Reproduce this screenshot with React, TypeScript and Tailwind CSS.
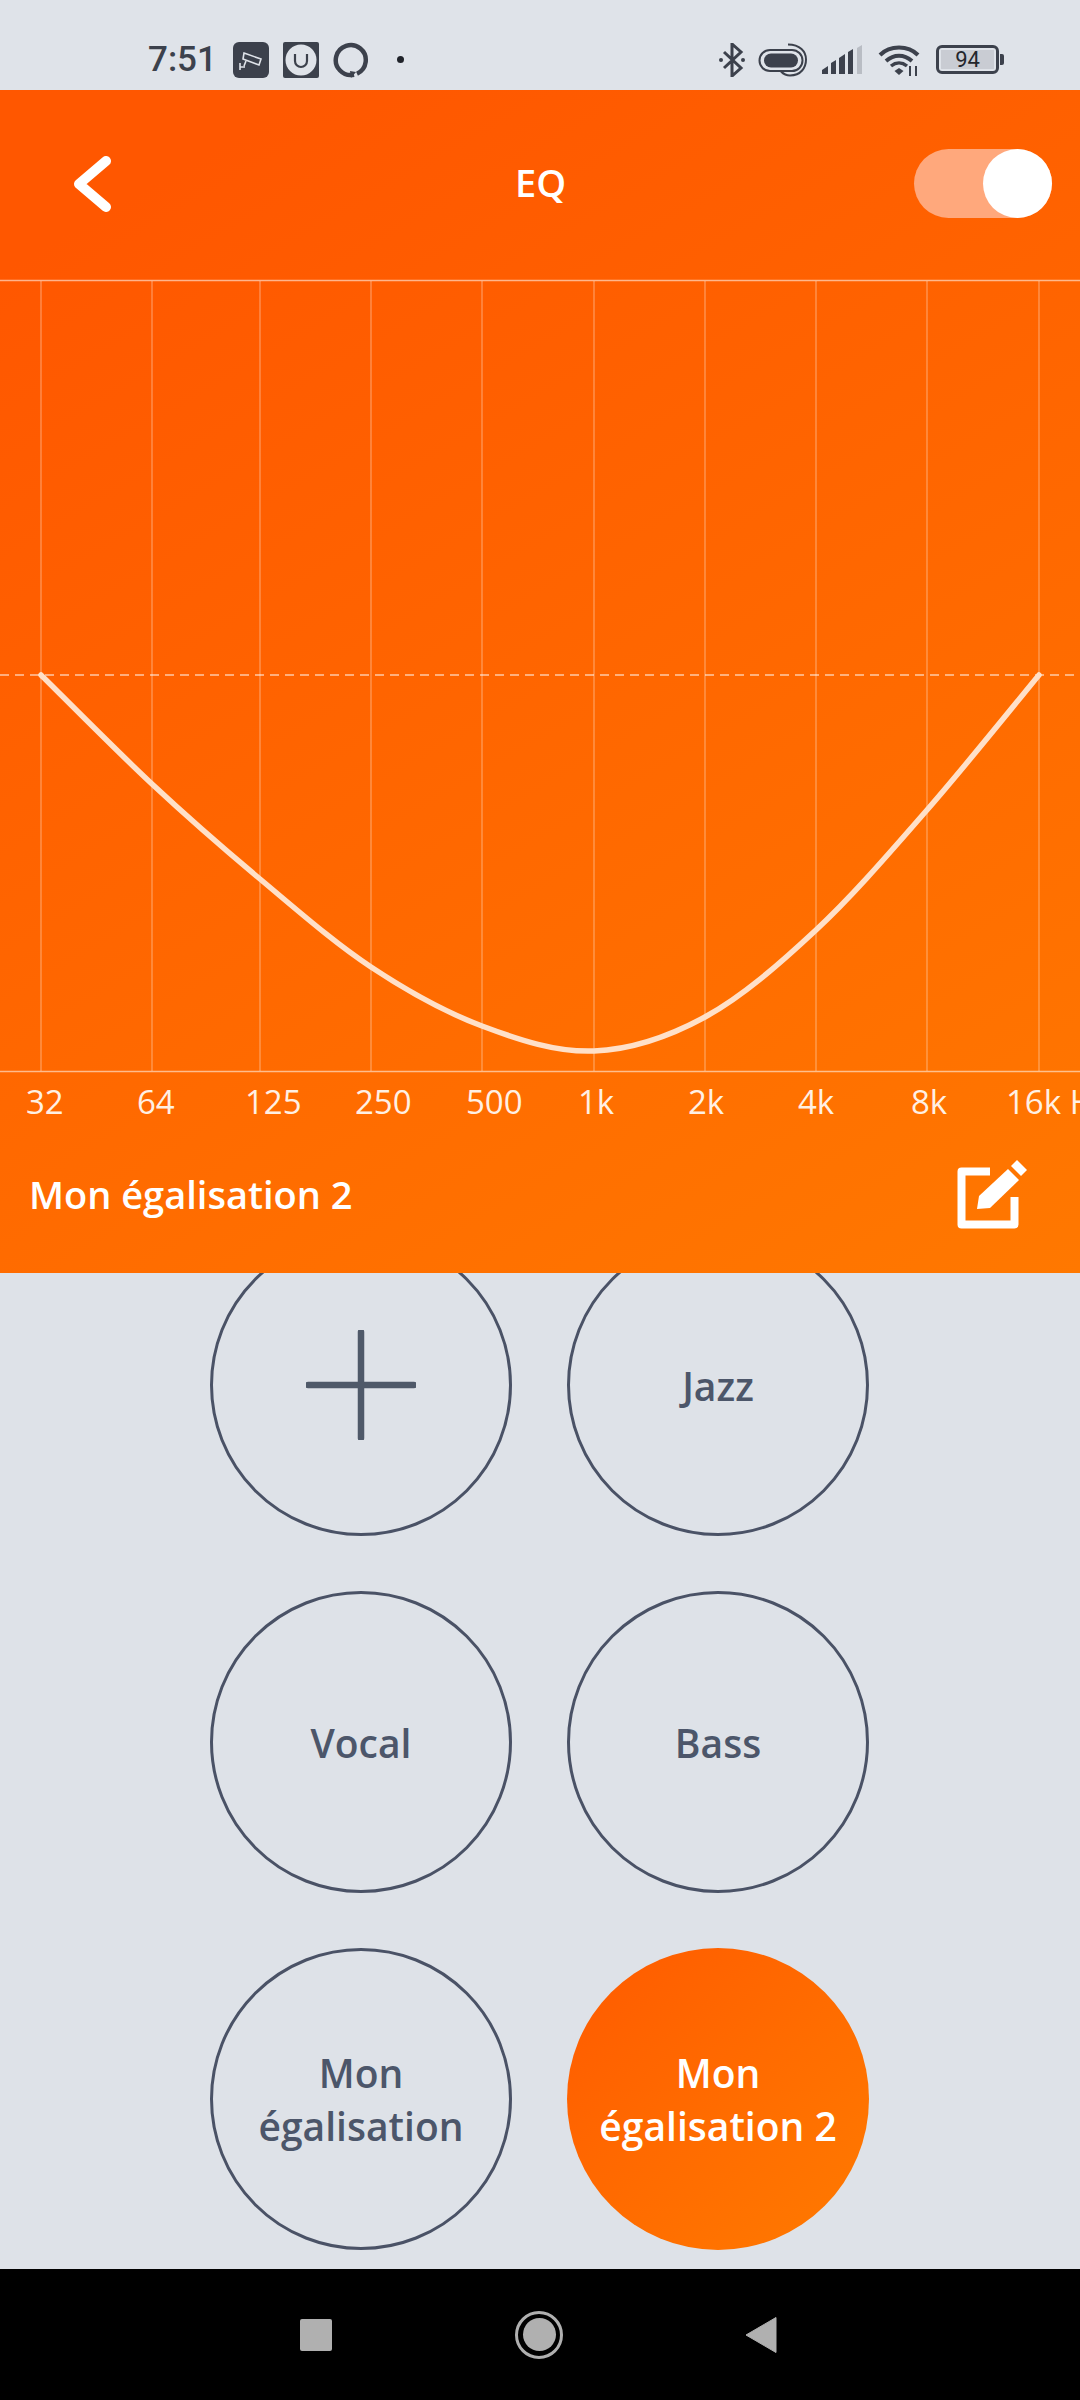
const curvePoints: [number, number][] = [
  [41, 396],
  [152, 505],
  [260, 600],
  [371, 688],
  [482, 747],
  [594, 772],
  [705, 738],
  [816, 651],
  [927, 531],
  [1039, 396],
];

const gridLines = [41, 152, 260, 371, 482, 594, 705, 816, 927, 1039];

// cell widths keep each label at its offset from the grid line
const bands = [
  { label: "32", width: "w-[111px]" },
  { label: "64", width: "w-[108px]" },
  { label: "125", width: "w-[110px]" },
  { label: "250", width: "w-[111px]" },
  { label: "500", width: "w-[112px]" },
  { label: "1k", width: "w-[110px]" },
  { label: "2k", width: "w-[110px]" },
  { label: "4k", width: "w-[113px]" },
  { label: "8k", width: "w-[95px]" },
  { label: "16k Hz", width: "w-[120px]" },
];

function smoothPath(points: [number, number][]) {
  let d = `M${points[0][0]} ${points[0][1]}`;
  for (let i = 0; i < points.length - 1; i++) {
    const p0 = points[Math.max(i - 1, 0)];
    const p1 = points[i];
    const p2 = points[i + 1];
    const p3 = points[Math.min(i + 2, points.length - 1)];
    const c1x = p1[0] + (p2[0] - p0[0]) / 6;
    const c1y = p1[1] + (p2[1] - p0[1]) / 6;
    const c2x = p2[0] - (p3[0] - p1[0]) / 6;
    const c2y = p2[1] - (p3[1] - p1[1]) / 6;
    d += ` C${c1x} ${c1y} ${c2x} ${c2y} ${p2[0]} ${p2[1]}`;
  }
  return d;
}

function StatusBar() {
  return (
    <div className="flex h-[90px] shrink-0 items-start bg-[#dfe3e9] pl-[148px] pt-[42px] text-[#3c414c]">
      <span className="w-[85px] font-['Roboto',sans-serif] text-[35px] font-medium leading-[36px]">7:51</span>
      <svg width="36" height="36" viewBox="0 0 36 36" className="shrink-0">
        <rect width="36" height="36" rx="6" fill="#3c414c" />
        <path d="M11 11l17 6-2 6-16-6z" fill="none" stroke="#dfe3e9" strokeWidth="1.6" />
        <path d="M13 19l-2 5M7 21v7M7 25h5" stroke="#dfe3e9" strokeWidth="1.6" fill="none" />
      </svg>
      <svg width="36" height="36" viewBox="0 0 36 36" className="ml-[14px] shrink-0">
        <rect width="36" height="36" rx="2" fill="#3c414c" />
        <circle cx="18" cy="18" r="15.500" fill="#dfe3e9" />
        <path d="M12 12v7a6 6 0 0 0 12 0v-7" fill="none" stroke="#3c414c" strokeWidth="2.200" />
      </svg>
      <svg width="36" height="36" viewBox="0 0 36 36" className="ml-[14px] shrink-0">
        <path d="M21 32.700A15 15 0 1 1 24 31.700" fill="none" stroke="#3c414c" strokeWidth="4.500" />
        <path d="M18 36l5-6-6-1z" fill="#3c414c" />
      </svg>
      <div className="ml-[28px] mt-[14px] h-[7px] w-[7px] shrink-0 rounded-full bg-[#20232a]" />

      <svg width="28" height="34" viewBox="0 0 28 34" className="ml-[314px] mt-px shrink-0" fill="none" stroke="#3c414c">
        <path d="M6 9l17 16-9 8V1l9 8L6 25" strokeWidth="3" />
        <circle cx="3" cy="17" r="2" fill="#3c414c" stroke="none" />
        <circle cx="25" cy="17" r="2" fill="#3c414c" stroke="none" />
      </svg>
      <svg width="50" height="34" viewBox="0 0 50 34" className="ml-[12px] mt-px shrink-0" fill="none" stroke="#3c414c">
        <rect x="1.500" y="7" width="43" height="21" rx="10.500" strokeWidth="2" />
        <rect x="6" y="10.500" width="34" height="14" rx="7" fill="#3c414c" stroke="none" />
        <path d="M30 1.500c12 0 18 7 18 15s-5 16-16 16c-4 0-7-2-9-4" strokeWidth="2" />
      </svg>
      <svg width="40" height="30" viewBox="0 0 40 30" className="ml-[14px] mt-[3px] shrink-0" fill="#3c414c">
        <path d="M0 29v-4l6-4v8zM9 29V18l5-3v14zM17 29V13l6-4v20zM26 29V7l5-3v25z" />
        <path d="M35 29V3l5-3v29z" fill="#b9bdc4" />
      </svg>
      <svg width="44" height="34" viewBox="0 0 44 34" className="ml-[16px] mt-[2px] shrink-0" fill="none" stroke="#3c414c">
        <path d="M2 11C12 1 30 1 40 11" strokeWidth="4" />
        <path d="M8 17c8-7 18-7 26 0" strokeWidth="4" />
        <path d="M13 22c5-4 11-4 16 0" strokeWidth="3.500" />
        <path d="M16.500 27l4.500-3 4.500 3-4.500 4z" fill="#3c414c" stroke="none" />
        <path d="M32 22v10M38 22v10" strokeWidth="2" />
      </svg>
      <div className="ml-[14px] mt-[3px] flex h-[29px] w-[63px] shrink-0 items-center justify-center rounded-[6px] border-[3px] border-[#3c414c] p-[2px]">
        <span className="flex h-full w-full items-center justify-center bg-[#c9ccd3] font-['Roboto',sans-serif] text-[22px] leading-none text-[#23262d]">94</span>
      </div>
      <div className="ml-px mt-[12px] h-[11px] w-[4px] shrink-0 rounded-r-[2px] bg-[#3c414c]" />
    </div>
  );
}

function EqChart() {
  return (
    <svg width="1080" height="794" viewBox="0 0 1080 794" className="block shrink-0">
      <path d="M0 1.500H1080M0 792.500H1080" stroke="#ffffff" strokeOpacity="0.55" strokeWidth="1.500" />
      {gridLines.map((x) => (
        <path key={x} d={`M${x} 2V792`} stroke="#ffffff" strokeOpacity="0.38" strokeWidth="1.200" />
      ))}
      <path d="M0 396H1080" stroke="#ffffff" strokeOpacity="0.65" strokeWidth="1.500" strokeDasharray="9 6" />
      <path d={smoothPath(curvePoints)} fill="none" stroke="#ffe0c8" strokeWidth="5.500" strokeLinecap="round" />
    </svg>
  );
}

function PresetCircle({ lines, active }: { lines: string[]; active?: boolean }) {
  return (
    <div
      className={
        active
          ? "flex h-[302px] w-[302px] items-center justify-center rounded-full bg-gradient-to-br from-[#ff5a00] to-[#ff7a00] text-center text-white"
          : "flex h-[302px] w-[302px] items-center justify-center rounded-full border-[3px] border-[#4a5266] text-center text-[#4c566a]"
      }
    >
      <span className="text-[39px] font-[550] leading-[53px]">
        {lines.map((line) => (
          <span key={line} className="block">{line}</span>
        ))}
      </span>
    </div>
  );
}

export default function App() {
  return (
    <div className="flex h-[2400px] w-[1080px] flex-col overflow-hidden bg-[#dee2e8] font-['Open_Sans',sans-serif]">
      <StatusBar />

      <div className="relative z-10 flex h-[1183px] shrink-0 flex-col overflow-hidden bg-[linear-gradient(150deg,#ff5700_10%,#ff7800_100%)] text-white">
        <div className="flex h-[189px] shrink-0 items-center pl-[73px] pr-[28px]">
          <svg width="38" height="56" viewBox="0 0 38 56" className="mt-[-2px] shrink-0" fill="none" stroke="#ffffff">
            <path d="M33 5L6 28l27 23" strokeWidth="10" strokeLinecap="round" strokeLinejoin="round" />
          </svg>
          <h1 className="mt-[-6px] flex-1 pl-[56px] text-center text-[38px] font-semibold leading-none">EQ</h1>
          <div className="mt-[-2px] flex h-[69px] w-[138px] shrink-0 justify-end rounded-full bg-[#ffa87c]">
            <div className="h-[69px] w-[69px] rounded-full bg-white" />
          </div>
        </div>

        <EqChart />

        <div className="flex h-[56px] w-[1200px] shrink-0 items-center pl-[26px] text-[33px] leading-none text-[#fff0e4]">
          {bands.map((band) => (
            <span key={band.label} className={`${band.width} shrink-0 whitespace-nowrap`}>{band.label}</span>
          ))}
        </div>

        <div className="flex h-[130px] shrink-0 items-center justify-between pl-[29px] pr-[53px]">
          <span className="text-[38px] font-semibold leading-none">Mon égalisation 2</span>
          <svg width="70" height="70" viewBox="0 0 70 70" className="shrink-0">
            <path d="M33 12.500H4.500V65.500H57.500V38" fill="none" stroke="#ffffff" strokeWidth="8" strokeLinejoin="round" />
            <path d="M20 50l2-13 29-27 11 11-29 28z" fill="#ffffff" />
            <path d="M54 7l6-6 10 10-6 6z" fill="#ffffff" />
          </svg>
        </div>
      </div>

      <div className="min-h-0 flex-1 overflow-hidden">
        <div className="mt-[-39px] grid grid-cols-[302px_302px] gap-x-[55px] gap-y-[55px] pl-[210px]">
          <div className="flex h-[302px] w-[302px] items-center justify-center rounded-full border-[3px] border-[#4a5266]">
            <svg width="110" height="110" viewBox="0 0 110 110" fill="none" stroke="#4f5969">
              <path d="M55 2V108M2 55H108" strokeWidth="6.500" strokeLinecap="round" />
            </svg>
          </div>
          <PresetCircle lines={["Jazz"]} />
          <PresetCircle lines={["Vocal"]} />
          <PresetCircle lines={["Bass"]} />
          <PresetCircle lines={["Mon", "égalisation"]} />
          <PresetCircle lines={["Mon", "égalisation 2"]} active />
        </div>
      </div>

      <div className="flex h-[131px] shrink-0 items-center bg-black pl-[300px]">
        <div className="h-[32px] w-[32px] rounded-[2px] bg-[#b0b0b0]" />
        <div className="ml-[183px] flex h-[48px] w-[48px] items-center justify-center rounded-full border-[3px] border-[#b0b0b0]">
          <div className="h-[33px] w-[33px] rounded-full bg-[#b0b0b0]" />
        </div>
        <svg width="32" height="38" viewBox="0 0 32 38" className="ml-[182px]">
          <path d="M31 1.500V36.500L1 19z" fill="#b0b0b0" stroke="#b0b0b0" strokeLinejoin="round" />
        </svg>
      </div>
    </div>
  );
}
